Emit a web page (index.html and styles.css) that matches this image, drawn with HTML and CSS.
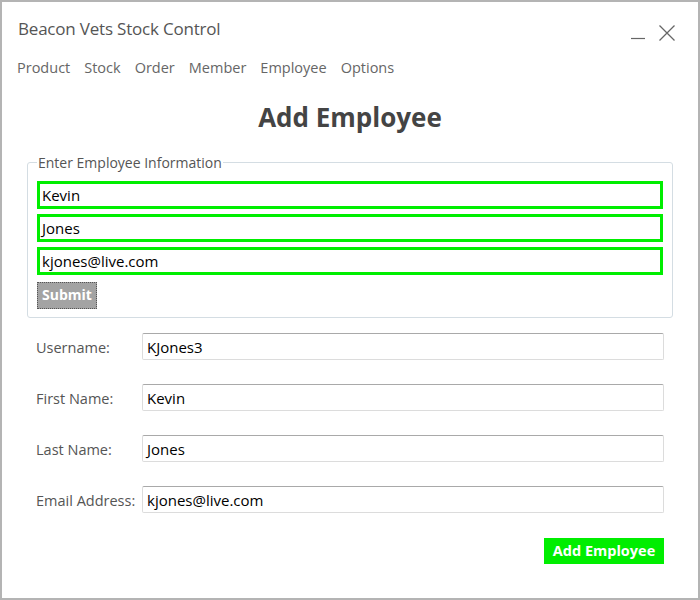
FILE: index.html
```html
<!DOCTYPE html>
<html>
<head>
<meta charset="utf-8">
<link rel="stylesheet" href="styles.css">
</head>
<body>
<div class="window">
  <header class="titlebar">
    <div class="app-title">Beacon Vets Stock Control</div>
    <div class="win-controls">
      <svg class="ctl" width="16" height="16" viewBox="0 0 16 16"><line x1="1" y1="14.5" x2="15" y2="14.5" stroke="#666" stroke-width="1.2"/></svg>
      <svg class="ctl" width="18" height="18" viewBox="0 0 18 18"><path d="M1.5 1.5 L16.5 16.5 M16.5 1.5 L1.5 16.5" stroke="#666" stroke-width="1.3" fill="none"/></svg>
    </div>
  </header>
  <nav class="menu">
    <span>Product</span><span>Stock</span><span>Order</span><span>Member</span><span>Employee</span><span>Options</span>
  </nav>
  <h1 class="heading">Add Employee</h1>
  <fieldset class="info">
    <legend>Enter Employee Information</legend>
    <div class="ginput">Kevin</div>
    <div class="ginput">Jones</div>
    <div class="ginput">kjones@live.com</div>
    <div class="submit">Submit</div>
  </fieldset>
  <div class="form">
    <div class="row"><label>Username:</label><div class="field">KJones3</div></div>
    <div class="row"><label>First Name:</label><div class="field">Kevin</div></div>
    <div class="row"><label>Last Name:</label><div class="field">Jones</div></div>
    <div class="row"><label>Email Address:</label><div class="field">kjones@live.com</div></div>
  </div>
  <div class="actions"><div class="add-btn">Add Employee</div></div>
</div>
</body>
</html>
```
FILE: styles.css
```css
* { box-sizing: border-box; }
html, body { margin: 0; padding: 0; background: #fff; }
body { font-family: "Open Sans", "Noto Sans", sans-serif; }
.window {
  width: 700px; height: 600px;
  border: 2px solid #b4b4b4;
  background: #fff;
}
.titlebar {
  display: flex; justify-content: space-between; align-items: flex-start;
  padding: 16px 22px 0 16px;
  height: 56px;
}
.app-title { font-size: 17px; color: #555; line-height: 22px; letter-spacing: -0.2px; }
.win-controls { display: flex; gap: 12px; padding-top: 6px; }
.menu {
  display: flex; gap: 14px;
  padding-left: 15px;
  font-size: 14.5px; color: #666;
  line-height: 20px;
}
.heading {
  margin: 22px 0 0; text-align: center;
  font-size: 26px; font-weight: 700; color: #444;
  line-height: 34px;
}
.info {
  margin: 19px 25px 0;
  border: 1px solid #d4dde3; border-radius: 3px;
  padding: 9px 9px 8px;
}
.info legend { font-size: 14px; color: #555; padding: 0 1px; margin-left: 0; }
.ginput {
  height: 28px; border: 3px solid #00ee00;
  font-size: 15px; color: #000; line-height: 23px; padding-left: 2px;
  margin-bottom: 5px;
}
.submit {
  display: inline-block; margin-top: 2px;
  width: 60px; height: 27px;
  background: #a3a3a3; border: 1px dotted #555;
  color: #fff; font-weight: 700; font-size: 14px;
  text-align: center; line-height: 24px;
}
.form { padding: 15px 34px 0 34px; display: flex; flex-direction: column; gap: 24px; }
.row { display: flex; align-items: center; }
.row label { width: 106px; font-size: 14.5px; color: #555; padding-top: 2px; }
.field {
  flex: 1; height: 27px;
  border: 1px solid #dcdcdc; border-top-color: #a9a9a9; border-radius: 2px;
  font-size: 15px; color: #000; line-height: 26px; padding-left: 4px;
}
.actions { display: flex; justify-content: flex-end; padding: 25px 34px 0; }
.add-btn {
  width: 120px; height: 26px; background: #00ee00;
  color: #fff; font-weight: 700; font-size: 14.5px;
  text-align: center; line-height: 26px;
}
```
